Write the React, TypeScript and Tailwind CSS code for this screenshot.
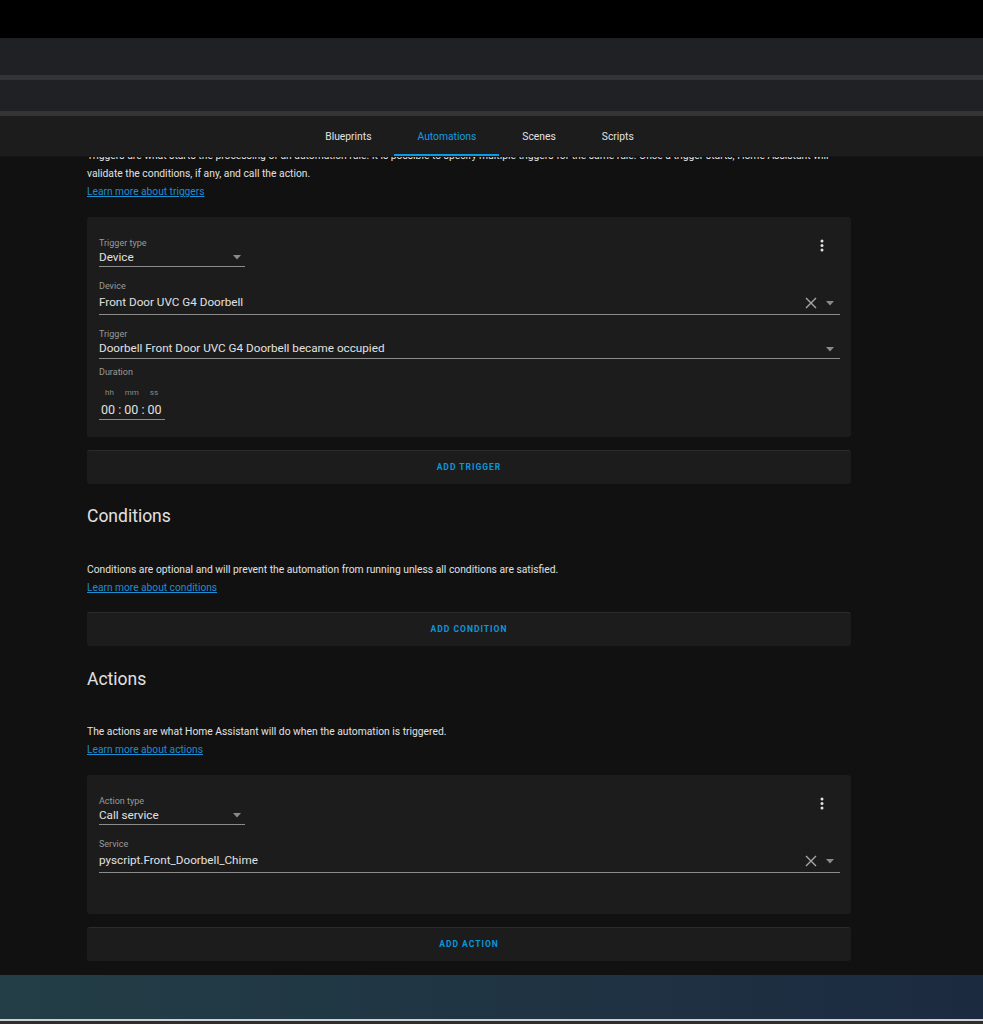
import React from 'react';

const font = { fontFamily: 'Roboto, "Noto Sans", sans-serif' };

function Caret({ className = '' }: { className?: string }) {
  return (
    <svg width="8" height="5" viewBox="0 0 8 5" className={className}>
      <path d="M0 0 L8 0 L4 4.5 Z" fill="#8a8a8a" />
    </svg>
  );
}

function ClearIcon() {
  return (
    <svg width="12" height="12" viewBox="0 0 12 12">
      <path d="M1 1 L11 11 M11 1 L1 11" stroke="#a8a8a8" strokeWidth="1.4" fill="none" />
    </svg>
  );
}

function Kebab() {
  return (
    <svg width="4" height="13" viewBox="0 0 4 13">
      <circle cx="2" cy="2" r="1.5" fill="#e1e1e1" />
      <circle cx="2" cy="6.5" r="1.5" fill="#e1e1e1" />
      <circle cx="2" cy="11" r="1.5" fill="#e1e1e1" />
    </svg>
  );
}

function SmallSelect({ label, value }: { label: string; value: string }) {
  return (
    <div className="w-[146px]">
      <div className="text-[9px] leading-[12px] text-[#9a9a9a]">{label}</div>
      <div className="flex items-center justify-between h-[18px] border-b border-[#8c8c8c] pr-[4px]">
        <span className="text-[11.7px] text-[#e1e1e1]">{value}</span>
        <Caret />
      </div>
    </div>
  );
}

function WideField({ label, value, clear, tall }: { label: string; value: string; clear?: boolean; tall?: boolean }) {
  return (
    <div>
      <div className="text-[9px] leading-[12px] text-[#9a9a9a]">{label}</div>
      <div className={`flex items-center border-b border-[#8c8c8c] ${tall ? 'h-[23px]' : 'h-[19px]'}`}>
        <span className="flex-1 text-[11.7px] text-[#e1e1e1]">{value}</span>
        {clear && (
          <span className="mr-[9px] flex items-center">
            <ClearIcon />
          </span>
        )}
        <span className="mr-[6px] flex items-center">
          <Caret />
        </span>
      </div>
    </div>
  );
}

function AddButton({ label }: { label: string }) {
  return (
    <div className="h-[34px] rounded-[3px] bg-[#1c1c1c] border-t border-[#2c2c2c] flex items-center justify-center">
      <span className="text-[8.5px] font-bold tracking-[1px] text-[#0a97dd]">{label}</span>
    </div>
  );
}

function Link({ children }: { children: React.ReactNode }) {
  return (
    <div className="text-[10.2px] leading-[18px]">
      <span className="text-[#1a8fd2] underline">{children}</span>
    </div>
  );
}

export default function App() {
  return (
    <div style={font} className="w-[983px] h-[1024px] bg-black flex flex-col overflow-hidden">
      <div className="h-[38px] shrink-0 bg-black" />
      <div className="h-[37px] shrink-0 bg-[#202124]" />
      <div className="h-[5px] shrink-0 bg-[#343437]" />
      <div className="h-[31px] shrink-0 bg-[#202124]" />
      <div className="h-[5px] shrink-0 bg-[#343437]" />

      {/* tabs */}
      <div className="h-[41px] shrink-0 bg-[#1c1c1c] flex justify-center pr-[24px] border-b border-[#141414]">
        {['Blueprints', 'Automations', 'Scenes', 'Scripts'].map((t) => (
          <div
            key={t}
            className={`relative px-[23px] pt-[2px] flex items-center text-[10.3px] ${
              t === 'Automations' ? 'text-[#149be0]' : 'text-[#e1e1e1]'
            }`}
          >
            <span>{t}</span>
            {t === 'Automations' && <div className="absolute left-0 right-0 bottom-0 h-[2px] bg-[#0b9be3]" />}
          </div>
        ))}
      </div>

      {/* content */}
      <div className="flex-1 min-h-0 bg-[#111111] overflow-hidden">
        <div className="ml-[87px] w-[764px] pb-[15px]">
          <p className="-mt-[10px] text-[10.3px] leading-[18px] text-[#e1e1e1] whitespace-nowrap">
            Triggers are what starts the processing of an automation rule. It is possible to specify multiple triggers for the same rule. Once a trigger starts, Home Assistant will
            <br />
            validate the conditions, if any, and call the action.
          </p>
          <Link>Learn more about triggers</Link>

          {/* trigger card */}
          <div className="mt-[16px] rounded-[3px] bg-[#1c1c1c] pl-[12px] pr-[11px] pt-[20px] pb-[17px]">
            <div className="flex justify-between">
              <SmallSelect label="Trigger type" value="Device" />
              <div className="pt-[2px] pr-[16px]">
                <Kebab />
              </div>
            </div>
            <div className="mt-[13px]">
              <WideField label="Device" value="Front Door UVC G4 Doorbell" clear tall />
            </div>
            <div className="mt-[13px]">
              <WideField label="Trigger" value="Doorbell Front Door UVC G4 Doorbell became occupied" />
            </div>
            <div className="mt-[7px] text-[9px] leading-[12px] text-[#9a9a9a]">Duration</div>
            <div className="mt-[10px] w-[66px] border-b border-[#8c8c8c] pb-[1px]">
              <div className="flex pl-[6px] gap-[11px] text-[8px] leading-[10px] text-[#8a8a8a]">
                <span>hh</span>
                <span>mm</span>
                <span>ss</span>
              </div>
              <div className="mt-[4px] pl-[2px] text-[12.5px] leading-[16px] text-[#e1e1e1] whitespace-nowrap">00 : 00 : 00</div>
            </div>
          </div>

          <div className="mt-[13px]">
            <AddButton label="ADD TRIGGER" />
          </div>

          <h2 className="mt-[20px] text-[17.5px] leading-[24px] font-normal text-[#e1e1e1]">Conditions</h2>
          <p className="mt-[33px] text-[10.3px] leading-[18px] text-[#e1e1e1]">
            Conditions are optional and will prevent the automation from running unless all conditions are satisfied.
          </p>
          <Link>Learn more about conditions</Link>
          <div className="mt-[15px]">
            <AddButton label="ADD CONDITION" />
          </div>

          <h2 className="mt-[21px] text-[17.5px] leading-[24px] font-normal text-[#e1e1e1]">Actions</h2>
          <p className="mt-[32px] text-[10.3px] leading-[18px] text-[#e1e1e1]">
            The actions are what Home Assistant will do when the automation is triggered.
          </p>
          <Link>Learn more about actions</Link>

          {/* action card */}
          <div className="mt-[16px] rounded-[3px] bg-[#1c1c1c] pl-[12px] pr-[11px] pt-[20px] pb-[41px]">
            <div className="flex justify-between">
              <SmallSelect label="Action type" value="Call service" />
              <div className="pt-[2px] pr-[16px]">
                <Kebab />
              </div>
            </div>
            <div className="mt-[13px]">
              <WideField label="Service" value="pyscript.Front_Doorbell_Chime" clear tall />
            </div>
          </div>

          <div className="mt-[13px]">
            <AddButton label="ADD ACTION" />
          </div>
        </div>
      </div>

      {/* bottom strip */}
      <div className="h-[44px] shrink-0 bg-gradient-to-r from-[#233e46] to-[#1c2a40]" />
      <div className="h-[2px] shrink-0 bg-[#cfcfcf]" />
      <div className="h-[3px] shrink-0 bg-[#2e2e2e]" />
    </div>
  );
}
